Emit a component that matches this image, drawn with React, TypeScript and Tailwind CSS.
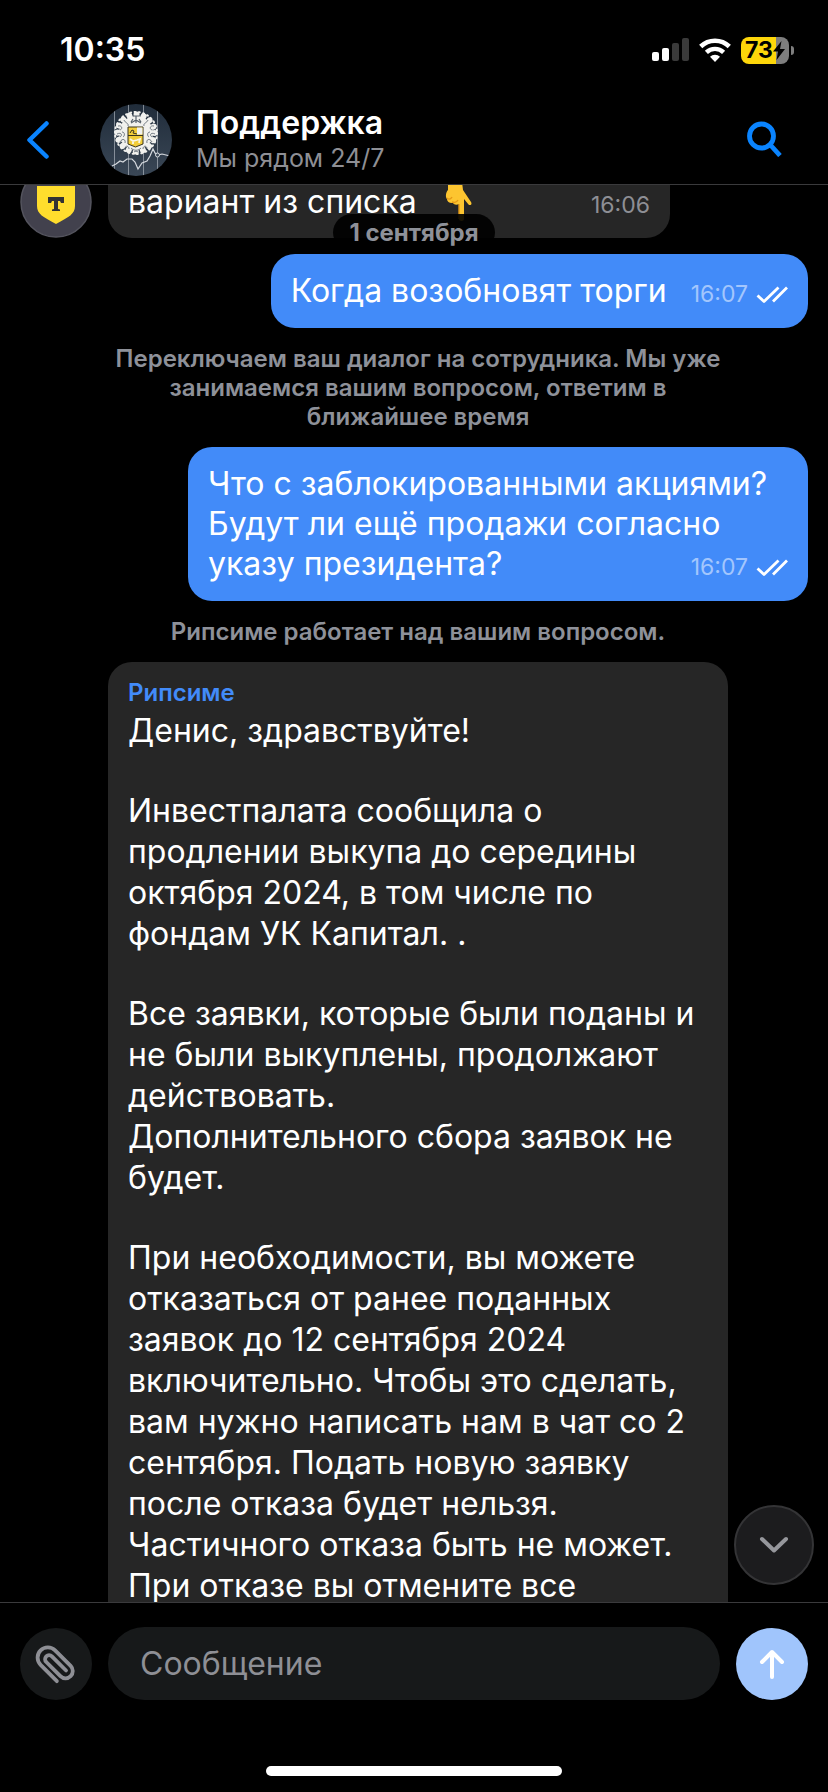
import clsx from 'clsx'
import type { ReactNode } from 'react'

const agentParagraphs = [
  'Денис, здравствуйте!',
  'Инвестпалата сообщила о\nпродлении выкупа до середины\nоктября 2024, в том числе по\nфондам УК Капитал. .',
  'Все заявки, которые были поданы и\nне были выкуплены, продолжают\nдействовать.\nДополнительного сбора заявок не\nбудет.',
  'При необходимости, вы можете\nотказаться от ранее поданных\nзаявок до 12 сентября 2024\nвключительно. Чтобы это сделать,\nвам нужно написать нам в чат со 2\nсентября. Подать новую заявку\nпосле отказа будет нельзя.\nЧастичного отказа быть не может.\nПри отказе вы отмените все',
]

export default function App() {
  return (
    <div className="flex h-screen flex-col overflow-hidden bg-black font-['Inter','Noto_Sans',sans-serif] text-white">
      <StatusBar />
      <ChatHeader />
      <ChatHistory />
      <Composer />
    </div>
  )
}

function StatusBar() {
  return (
    <div className="flex h-[100px] shrink-0 items-center justify-between pr-[34px] pl-[60px]">
      <time className="text-[32px] leading-[40px] font-semibold">10:35</time>
      <div className="flex items-center gap-[10px]">
        <SignalIcon />
        <WifiIcon />
        <Battery />
      </div>
    </div>
  )
}

function Battery() {
  return (
    <div className="flex items-center gap-[2px]">
      <div className="flex h-[27px] w-12 items-center justify-center rounded-lg bg-linear-to-r from-[#fdd60a] from-73% to-[#7e7e7e] to-73% text-black">
        <span className="text-[23px] leading-[27px] font-bold">73</span>
        <svg className="h-[19px] w-3" viewBox="0 0 12 19" aria-hidden="true">
          <path d="M8.5 0 0 10.5h5L3.5 19 12 8H7z" fill="currentColor" />
        </svg>
      </div>
      <div className="h-[9px] w-[3px] rounded-r-full bg-[#7e7e7e]" />
    </div>
  )
}

function ChatHeader() {
  return (
    <header className="flex h-[85px] shrink-0 items-start border-b border-[#3a3a3c] pt-1 pr-[46px] pl-[26px]">
      <button type="button" aria-label="Назад" className="flex h-[72px] w-[74px] items-center text-[#0a84ff]">
        <svg className="h-[38px] w-6" viewBox="0 0 24 38" fill="none" aria-hidden="true">
          <path d="M20.500 2.500 3.500 19l17 16.500" stroke="currentColor" strokeWidth="4.500" strokeLinecap="round" strokeLinejoin="round" />
        </svg>
      </button>
      <SupportAvatar />
      <div className="ml-6 flex-1">
        <h1 className="text-[32px] leading-[37px] font-semibold">Поддержка</h1>
        <p className="text-[25px] leading-[34px] text-[#8e8f95]">Мы рядом 24/7</p>
      </div>
      <button type="button" aria-label="Поиск" className="flex h-[70px] items-center text-[#0a84ff]">
        <svg className="h-9 w-9" viewBox="0 0 36 36" fill="none" stroke="currentColor" aria-hidden="true">
          <circle cx="15.500" cy="15" r="12" strokeWidth="4.800" />
          <path d="m24 23.500 10 11" strokeWidth="4.800" />
        </svg>
      </button>
    </header>
  )
}

function ChatHistory() {
  return (
    <main className="relative min-h-0 flex-1 overflow-hidden">
      <div className="-mt-[19px] flex flex-col gap-4 px-5">
        <div className="flex gap-4">
          <BankAvatar />
          <div className="flex h-[72px] w-[562px] items-baseline justify-between rounded-b-3xl bg-[#262626] px-5 pt-[19px]">
            <p className="flex h-[33px] items-center gap-7 text-[32px] leading-[33px]">
              вариант из списка
              <PointingHand />
            </p>
            <MessageTime time="16:06" />
          </div>
        </div>

        <OutgoingMessage lines={['Когда возобновят торги']} />
        <SystemNote>
          {'Переключаем ваш диалог на сотрудника. Мы уже\nзанимаемся вашим вопросом, ответим в\nближайшее время'}
        </SystemNote>
        <OutgoingMessage
          lines={['Что с заблокированными акциями?', 'Будут ли ещё продажи согласно', 'указу президента?']}
        />
        <SystemNote>Рипсиме работает над вашим вопросом.</SystemNote>

        <article className="ml-[88px] w-[620px] rounded-3xl bg-[#262626] px-5 pt-4 pb-16">
          <h2 className="mb-[3px] text-[24px] leading-[29px] font-semibold text-[#428bf9]">Рипсиме</h2>
          <div className="flex flex-col gap-[39px] text-[32px] leading-[41px]">
            {agentParagraphs.map((text) => (
              <p key={text} className="whitespace-pre">
                {text}
              </p>
            ))}
          </div>
        </article>
      </div>

      <div className="absolute inset-x-0 top-[29px] flex justify-center">
        <span className="rounded-[20px] bg-black/90 px-4 py-1 text-[24px] leading-[29px] font-bold text-[#8e9199]">
          1 сентября
        </span>
      </div>

      <button
        type="button"
        aria-label="Вниз"
        className="absolute right-[14px] bottom-[17px] flex size-20 items-center justify-center rounded-full border-2 border-[#343436] bg-[#1c1c1e] text-[#96979c]"
      >
        <svg className="h-[18px] w-[30px]" viewBox="0 0 30 18" fill="none" aria-hidden="true">
          <path d="m3 3 12 11.500L27 3" stroke="currentColor" strokeWidth="4" strokeLinecap="round" strokeLinejoin="round" />
        </svg>
      </button>
    </main>
  )
}

function OutgoingMessage({ lines }: { lines: string[] }) {
  const lastLine = lines[lines.length - 1]

  return (
    <article
      className={clsx(
        'self-end rounded-3xl bg-[#428bf9] px-5 py-[17px] text-[32px] leading-[40px]',
        lines.length > 1 && 'w-[620px]',
      )}
    >
      {lines.slice(0, -1).map((line) => (
        <p key={line}>{line}</p>
      ))}
      {/* the time and the ticks share the last line */}
      <div className="flex items-baseline justify-between gap-6">
        <p>{lastLine}</p>
        <MessageTime time="16:07" outgoing />
      </div>
    </article>
  )
}

function MessageTime({ time, outgoing = false }: { time: string; outgoing?: boolean }) {
  return (
    <div
      className={clsx(
        'flex items-center gap-2 text-[23px] leading-[29px]',
        outgoing ? 'text-[#a3c6fd]' : 'text-[#8e8f95]',
      )}
    >
      <time>{time}</time>
      {outgoing ? (
        <svg className="h-[18px] w-8 text-white" viewBox="0 0 32 18" fill="none" aria-label="Прочитано">
          <path d="m1.500 9.500 6.500 6L22.500 1.500M17 15.500l14-14" stroke="currentColor" strokeWidth="2.800" strokeLinejoin="round" />
        </svg>
      ) : null}
    </div>
  )
}

function SystemNote({ children }: { children: ReactNode }) {
  return (
    <p className="ml-[88px] w-[620px] text-center text-[24px] leading-[29px] font-semibold whitespace-pre-line text-[#8e9199]">
      {children}
    </p>
  )
}

function Composer() {
  return (
    <footer className="shrink-0 border-t border-[#3a3a3c] px-5 pt-6 pb-4">
      <form className="flex items-center gap-4">
        <button type="button" aria-label="Прикрепить файл" className="flex size-[72px] shrink-0 items-center justify-center rounded-full bg-[#17191a] text-[#8e8f95]">
          <PaperclipIcon />
        </button>
        <input
          type="text"
          aria-label="Сообщение"
          placeholder="Сообщение"
          className="h-[73px] min-w-0 flex-1 rounded-full bg-[#17191a] px-8 text-[32px] leading-[41px] outline-none placeholder:text-[#8e8f95]"
        />
        <button type="submit" aria-label="Отправить" className="flex size-[72px] shrink-0 items-center justify-center rounded-full bg-[#a0c5fc] text-white">
          <svg className="h-[30px] w-[26px]" viewBox="0 0 26 30" fill="none" aria-hidden="true">
            <path d="M13 28V3M3 13 13 3l10 10" stroke="currentColor" strokeWidth="4" strokeLinecap="round" strokeLinejoin="round" />
          </svg>
        </button>
      </form>
      <div className="mx-auto mt-[66px] h-[10px] w-[296px] rounded-full bg-white" />
    </footer>
  )
}

function SignalIcon() {
  return (
    <svg className="h-6 w-[37px]" viewBox="0 0 37 24" fill="white" aria-hidden="true">
      <rect x="0" y="14" width="7" height="9" rx="2" />
      <rect x="10" y="10" width="7" height="13" rx="2" />
      <rect x="20" y="5" width="7" height="18" rx="2" fill="#3a3a3a" />
      <rect x="30" y="0" width="7" height="23" rx="2" fill="#3a3a3a" />
    </svg>
  )
}

function WifiIcon() {
  return (
    <svg className="h-6 w-8" viewBox="0 0 32 24" fill="none" stroke="white" aria-hidden="true">
      <path d="M1.700 8.500a20.500 20.500 0 0 1 28.600 0" strokeWidth="4.600" />
      <path d="M7.400 14.400a12.300 12.300 0 0 1 17.200 0" strokeWidth="4.400" />
      <path d="M16 24l-5-5.200a7 7 0 0 1 10 0z" fill="white" stroke="none" />
    </svg>
  )
}

function PaperclipIcon() {
  return (
    <svg className="size-10 overflow-visible" viewBox="0 0 40 40" fill="none" aria-hidden="true">
      <path
        transform="rotate(-45)"
        d="M-11.500 41V18a10.250 10.250 0 0 1 20.500 0v22a7.250 7.250 0 0 1-14.500 0V20a4 4 0 0 1 8 0v20"
        stroke="currentColor"
        strokeWidth="3.800"
        strokeLinecap="round"
      />
    </svg>
  )
}

function PointingHand() {
  return (
    <svg className="h-[39px] w-7" viewBox="0 0 28 39" aria-hidden="true">
      <path d="M3 0h14l1 8 8 12c1.500 2.500-1 4-2.500 2.500L19 17v20c0 2.500-5 2.500-5 0V22c-2 1-5 1-6-1-3 .5-6-1-6-4C0 15 1 10 3 8z" fill="#fdc530" />
      <path d="M2 16c2 2 4 1 5-1M7 20c3 1 5 0 6-2M14 22v15" stroke="#e69a16" strokeWidth="1.400" fill="none" />
    </svg>
  )
}

function BankAvatar() {
  return (
    <svg className="size-[72px] shrink-0" viewBox="0 0 72 72" aria-hidden="true">
      <circle cx="36" cy="36" r="35" fill="#42414d" stroke="#54545e" strokeWidth="1.500" />
      <path d="M17 20h38v20c0 8-6 11-19 18-13-7-19-10-19-18z" fill="#ffdd2d" />
      <path d="M28 31h16v6h-3l-1-2h-2v8l2 .500V45h-8v-1.500l2-.5v-8h-2l-1 2h-3z" fill="#333" />
    </svg>
  )
}

function SupportAvatar() {
  return (
    <svg className="size-[72px] shrink-0" viewBox="0 0 72 72" fill="none" aria-hidden="true">
      <defs>
        <clipPath id="support-avatar-clip">
          <circle cx="36" cy="36" r="36" />
        </clipPath>
        <linearGradient id="support-avatar-sky" x1="0" y1="0" x2="0" y2="1">
          <stop stopColor="#202c3a" />
          <stop offset="1" stopColor="#3a4756" />
        </linearGradient>
      </defs>
      <g clipPath="url(#support-avatar-clip)">
        <path d="M0 0h72v72H0z" fill="url(#support-avatar-sky)" />
        <path d="M14.500 0v72M28.500 0v72M43.500 0v72M57.500 0v72" stroke="#aab1b9" strokeWidth="1" opacity=".7" />
        <path d="m12 62 4-2 4-3 3 1 4-3 5 0 3 3 3 7 4-6 5-2 3-5 3-7 2 4 3 2 4-1 8 2" stroke="#d5d9de" strokeWidth="1.200" />
        <circle cx="57.500" cy="51" r="2" fill="#3a4756" stroke="#d5d9de" />
        {/* coat of arms: leafy wreath around the shield */}
        <circle cx="36" cy="29" r="17" fill="#f1f1ee" />
        <circle cx="36" cy="29" r="18.500" stroke="#f1f1ee" strokeWidth="6" strokeLinecap="round" strokeDasharray="0.100 7.160" />
        <circle cx="36" cy="29" r="21" stroke="#f1f1ee" strokeWidth="2" strokeLinecap="round" strokeDasharray="1 3.400" />
        <g stroke="#56606b" strokeWidth=".8">
          <path d="M18 22c4-1 5 3 2 4M17 30c4-2 6 1 3 3M20 38c2-4 6-3 5 1M24 16c1 3 5 3 4 6M22 28c3 0 3 4 1 5M25 44c1-3 4-2 4 1" />
          <path d="M54 22c-4-1-5 3-2 4M55 30c-4-2-6 1-3 3M52 38c-2-4-6-3-5 1M48 16c-1 3-5 3-4 6M50 28c-3 0-3 4-1 5M47 44c-1-3-4-2-4 1" />
          <path d="M33 12h6M36 12v7M31 19l5-3 5 3M33 15l-2 3M39 15l2 3" strokeWidth="1.200" />
          <path d="M31 44c3 3 7 3 10 0M34 48c1-1 3-1 4 0" />
        </g>
        <path d="M28 23h15v17l-7.500 3-7.500-3z" fill="#f2cd3a" stroke="#37331f" strokeWidth="1" />
        <path d="M37 23.500h5.500v7H37z" fill="#f1f1ee" />
        <path d="M28 31.500h15M30 29l2-3 2 1-1 2 4 1" stroke="#37331f" strokeWidth="1" />
        <path d="m30 35 3 2 4-1 3-1-1 4M33 37v3" stroke="#f8f5e6" strokeWidth="1.800" />
      </g>
    </svg>
  )
}
